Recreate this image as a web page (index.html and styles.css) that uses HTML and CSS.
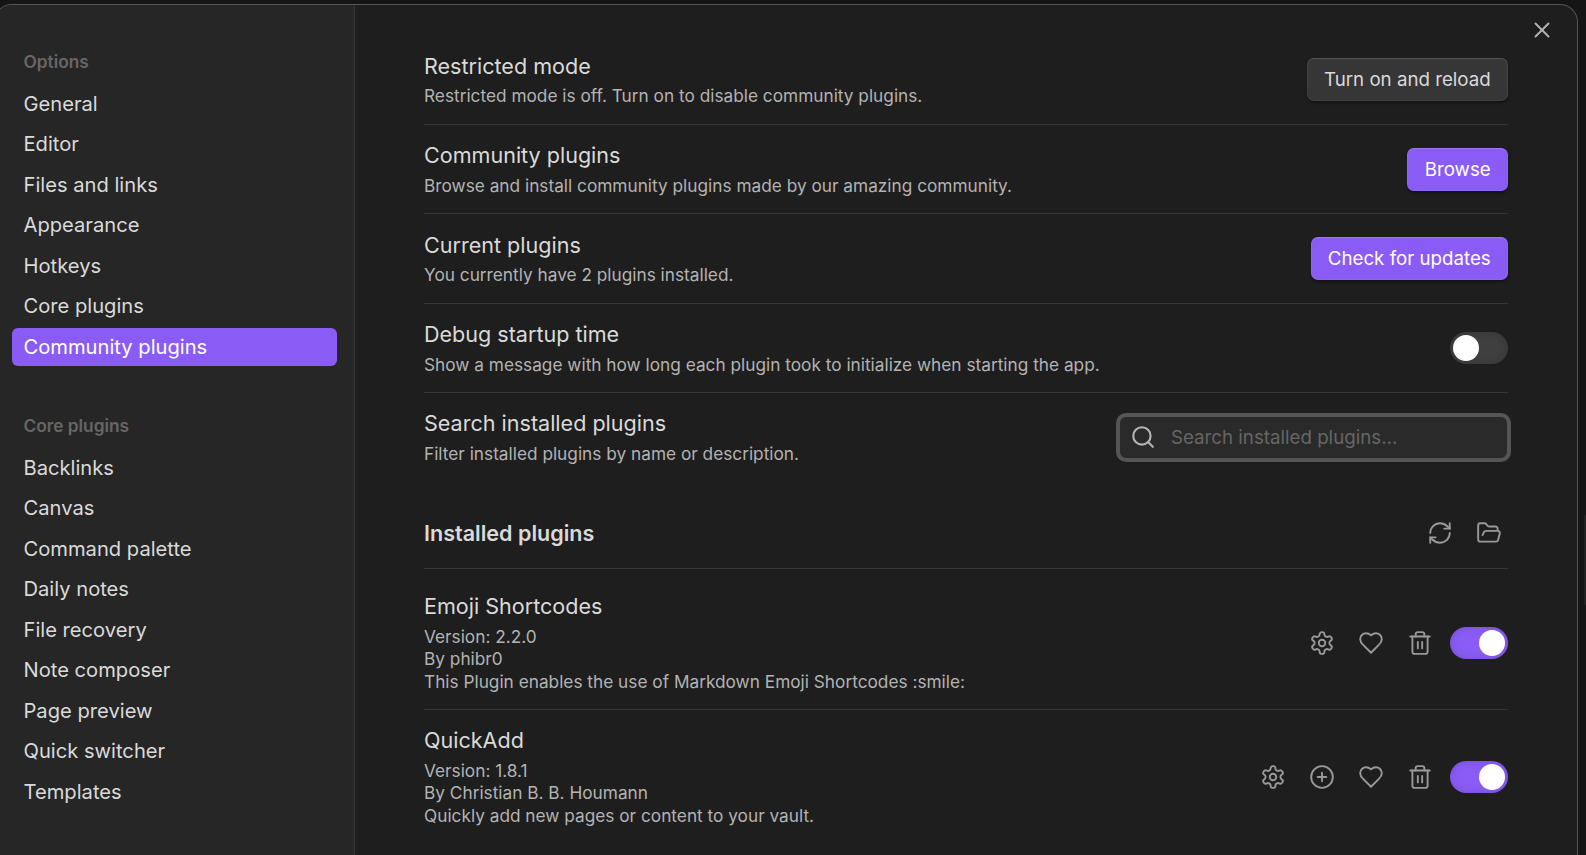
FILE: index.html
```html
<!DOCTYPE html>
<html lang="en">
<head>
<meta charset="utf-8">
<title>Settings</title>
<link rel="stylesheet" href="styles.css">
</head>
<body>
<svg class="sprite" aria-hidden="true">
  <symbol id="gear" viewBox="0 0 24 24"><path d="M12.22 2h-.44a2 2 0 0 0-2 2v.18a2 2 0 0 1-1 1.73l-.43.25a2 2 0 0 1-2 0l-.15-.08a2 2 0 0 0-2.73.73l-.22.38a2 2 0 0 0 .73 2.73l.15.1a2 2 0 0 1 1 1.72v.51a2 2 0 0 1-1 1.74l-.15.09a2 2 0 0 0-.73 2.73l.22.38a2 2 0 0 0 2.73.73l.15-.08a2 2 0 0 1 2 0l.43.25a2 2 0 0 1 1 1.73V20a2 2 0 0 0 2 2h.44a2 2 0 0 0 2-2v-.18a2 2 0 0 1 1-1.73l.43-.25a2 2 0 0 1 2 0l.15.08a2 2 0 0 0 2.73-.73l.22-.39a2 2 0 0 0-.73-2.73l-.15-.08a2 2 0 0 1-1-1.74v-.5a2 2 0 0 1 1-1.74l.15-.09a2 2 0 0 0 .73-2.73l-.22-.38a2 2 0 0 0-2.73-.73l-.15.08a2 2 0 0 1-2 0l-.43-.25a2 2 0 0 1-1-1.73V4a2 2 0 0 0-2-2z"/><circle cx="12" cy="12" r="3"/></symbol>
  <symbol id="heart" viewBox="0 0 24 24"><path d="M19 14c1.49-1.46 3-3.21 3-5.5A5.5 5.5 0 0 0 16.5 3c-1.76 0-3 .5-4.5 2-1.5-1.5-2.74-2-4.5-2A5.5 5.5 0 0 0 2 8.5c0 2.3 1.5 4.05 3 5.5l7 7Z"/></symbol>
  <symbol id="trash" viewBox="0 0 24 24"><path d="M3 6h18"/><path d="M19 6v14c0 1-1 2-2 2H7c-1 0-2-1-2-2V6"/><path d="M8 6V4c0-1 1-2 2-2h4c1 0 2 1 2 2v2"/><path d="M10 11v6"/><path d="M14 11v6"/></symbol>
  <symbol id="plus" viewBox="0 0 24 24"><circle cx="12" cy="12" r="10"/><path d="M8 12h8"/><path d="M12 8v8"/></symbol>
  <symbol id="refresh" viewBox="0 0 24 24"><path d="M3 12a9 9 0 0 1 9-9 9.75 9.75 0 0 1 6.74 2.74L21 8"/><path d="M21 3v5h-5"/><path d="M21 12a9 9 0 0 1-9 9 9.75 9.75 0 0 1-6.74-2.74L3 16"/><path d="M8 16H3v5"/></symbol>
  <symbol id="folder" viewBox="0 0 24 24"><path d="m6 14 1.45-2.9A2 2 0 0 1 9.24 10H20a2 2 0 0 1 1.94 2.5l-1.55 6a2 2 0 0 1-1.94 1.5H4a2 2 0 0 1-2-2V5c0-1.1.9-2 2-2h3.93a2 2 0 0 1 1.66.9l.82 1.2a2 2 0 0 0 1.66.9H18a2 2 0 0 1 2 2v2"/></symbol>
  <symbol id="search" viewBox="0 0 24 24"><circle cx="11" cy="11" r="8"/><path d="m21 21-4.3-4.3"/></symbol>
  <symbol id="close" viewBox="0 0 24 24"><path d="M18 6 6 18"/><path d="m6 6 12 12"/></symbol>
</svg>
<div class="modal">
  <nav class="sidebar">
    <div class="group">
      <div class="group-title">Options</div>
      <div class="nav-item">General</div>
      <div class="nav-item">Editor</div>
      <div class="nav-item">Files and links</div>
      <div class="nav-item">Appearance</div>
      <div class="nav-item">Hotkeys</div>
      <div class="nav-item">Core plugins</div>
      <div class="nav-item active">Community plugins</div>
    </div>
    <div class="group">
      <div class="group-title">Core plugins</div>
      <div class="nav-item">Backlinks</div>
      <div class="nav-item">Canvas</div>
      <div class="nav-item">Command palette</div>
      <div class="nav-item">Daily notes</div>
      <div class="nav-item">File recovery</div>
      <div class="nav-item">Note composer</div>
      <div class="nav-item">Page preview</div>
      <div class="nav-item">Quick switcher</div>
      <div class="nav-item">Templates</div>
    </div>
  </nav>
  <main class="content">
    <div class="setting">
      <div class="info"><div class="name">Restricted mode</div><div class="desc">Restricted mode is off. Turn on to disable community plugins.</div></div>
      <button class="btn">Turn on and reload</button>
    </div>
    <div class="setting">
      <div class="info"><div class="name">Community plugins</div><div class="desc">Browse and install community plugins made by our amazing community.</div></div>
      <button class="btn cta">Browse</button>
    </div>
    <div class="setting">
      <div class="info"><div class="name">Current plugins</div><div class="desc">You currently have 2 plugins installed.</div></div>
      <button class="btn cta">Check for updates</button>
    </div>
    <div class="setting">
      <div class="info"><div class="name">Debug startup time</div><div class="desc">Show a message with how long each plugin took to initialize when starting the app.</div></div>
      <div class="toggle"></div>
    </div>
    <div class="setting last">
      <div class="info"><div class="name">Search installed plugins</div><div class="desc">Filter installed plugins by name or description.</div></div>
      <label class="search"><svg class="icon search-icon"><use href="#search"/></svg><input class="search-input" type="text" placeholder="Search installed plugins..."></label>
    </div>
    <div class="setting heading">
      <div class="name">Installed plugins</div>
      <div class="controls"><span class="action"><svg class="icon"><use href="#refresh"/></svg></span><span class="action"><svg class="icon"><use href="#folder"/></svg></span></div>
    </div>
    <div class="setting plugin first">
      <div class="info"><div class="name">Emoji Shortcodes</div><div class="desc">Version: 2.2.0</div><div class="desc">By phibr0</div><div class="desc">This Plugin enables the use of Markdown Emoji Shortcodes :smile:</div></div>
      <div class="controls"><span class="action"><svg class="icon"><use href="#gear"/></svg></span><span class="action"><svg class="icon"><use href="#heart"/></svg></span><span class="action"><svg class="icon"><use href="#trash"/></svg></span><div class="toggle on"></div></div>
    </div>
    <div class="setting plugin last">
      <div class="info"><div class="name">QuickAdd</div><div class="desc">Version: 1.8.1</div><div class="desc">By Christian B. B. Houmann</div><div class="desc">Quickly add new pages or content to your vault.</div></div>
      <div class="controls"><span class="action"><svg class="icon"><use href="#gear"/></svg></span><span class="action"><svg class="icon"><use href="#plus"/></svg></span><span class="action"><svg class="icon"><use href="#heart"/></svg></span><span class="action"><svg class="icon"><use href="#trash"/></svg></span><div class="toggle on"></div></div>
    </div>
  </main>
  <svg class="icon close"><use href="#close"/></svg>
</div>
<div class="page-scroll"></div>
</body>
</html>
```
FILE: styles.css
```css
* { box-sizing: border-box; }
body {
  margin: 0;
  height: 855px;
  padding-top: 4px;
  overflow: hidden;
  position: relative;
  background: #151515;
  font-family: Inter, sans-serif;
  font-size: 20.16px;
  color: #dadada;
}
.sprite { display: none; }
.modal {
  position: relative;
  display: flex;
  width: 1584px;
  height: 851px;
  margin-left: -6px;
  border: 1px solid #555;
  border-bottom: 0;
  border-radius: 18px 18px 0 0;
  background: #1e1e1e;
  overflow: hidden;
}
.sidebar {
  flex: none;
  width: 360px;
  padding: 35.8px 17px 0;
  background: #262626;
  border-right: 1px solid #363636;
}
.group + .group { margin-top: 39px; }
.group-title {
  height: 44px;
  padding: 9px 11.5px 0;
  font-size: 17.28px;
  line-height: 24px;
  font-weight: 600;
  color: #666;
}
.nav-item {
  height: 38px;
  margin-bottom: 2.5px;
  padding: 0 11.5px;
  border-radius: 6px;
  line-height: 38px;
}
.nav-item.active { background: #8a5cf5; color: #fff; }
.content { flex: 1; padding: 30.6px 69px 0; }
.setting {
  display: flex;
  align-items: center;
  justify-content: space-between;
  height: 89.4px;
  border-bottom: 1px solid #363636;
}
.name { font-size: 21.55px; line-height: 28px; }
.desc { font-size: 17.26px; line-height: 22.5px; color: #b3b3b3; }
.name + .desc { margin-top: 5.6px; }
.btn {
  height: 43px;
  padding: 0 17.3px;
  border: 0;
  border-radius: 7px;
  background: #363636;
  color: #dadada;
  font: inherit;
  font-size: 18.72px;
  box-shadow: inset 0 1px 1px rgba(255,255,255,.12), inset 0 0 0 1px rgba(255,255,255,.06), 0 2px 3px rgba(0,0,0,.4);
}
.btn.cta { background: #8a5cf5; color: #fff; }
.toggle {
  width: 58px;
  height: 32px;
  padding: 3px;
  border-radius: 16px;
  background: #3f3f3f;
  box-shadow: inset 0 0 8px rgba(0,0,0,.16);
}
.toggle::before {
  content: "";
  display: block;
  width: 26px;
  height: 26px;
  border-radius: 50%;
  background: #fff;
}
.toggle.on { background: #8a5cf5; }
.toggle.on::before { margin-left: 26px; }
.search {
  display: flex;
  align-items: center;
  width: 395px;
  height: 49px;
  margin-right: -3px;
  padding-left: 10px;
  border: 4px solid #555;
  border-radius: 10px;
  background: #2a2a2a;
}
.search-input {
  flex: 1;
  margin-left: 15px;
  padding: 0;
  border: 0;
  outline: 0;
  background: none;
  font: inherit;
  font-size: 18.72px;
  color: #dadada;
}
.search-input::placeholder { color: #666; opacity: 1; }
.icon {
  width: 26px;
  height: 26px;
  fill: none;
  stroke: #999;
  stroke-width: 1.75;
  stroke-linecap: round;
  stroke-linejoin: round;
}
.search-icon { stroke: #b3b3b3; stroke-width: 2; }
.controls { display: flex; align-items: center; }
.action { display: flex; justify-content: center; width: 49px; }
.controls .toggle { margin-left: 6px; }
.heading { height: 86.4px; padding-top: 16px; }
.heading .name { font-weight: 600; }
.heading .controls { margin-right: -5px; }
.plugin { height: 141px; }
.plugin.first { padding-top: 8px; }
.plugin.last { height: 135px; }
.setting.last { border-bottom-color: transparent; }
.close {
  position: absolute;
  top: 12px;
  right: 22px;
  stroke: #b3b3b3;
}
.page-scroll {
  position: absolute;
  right: 0;
  top: 515px;
  width: 2px;
  height: 90px;
  background: #222;
}
```
